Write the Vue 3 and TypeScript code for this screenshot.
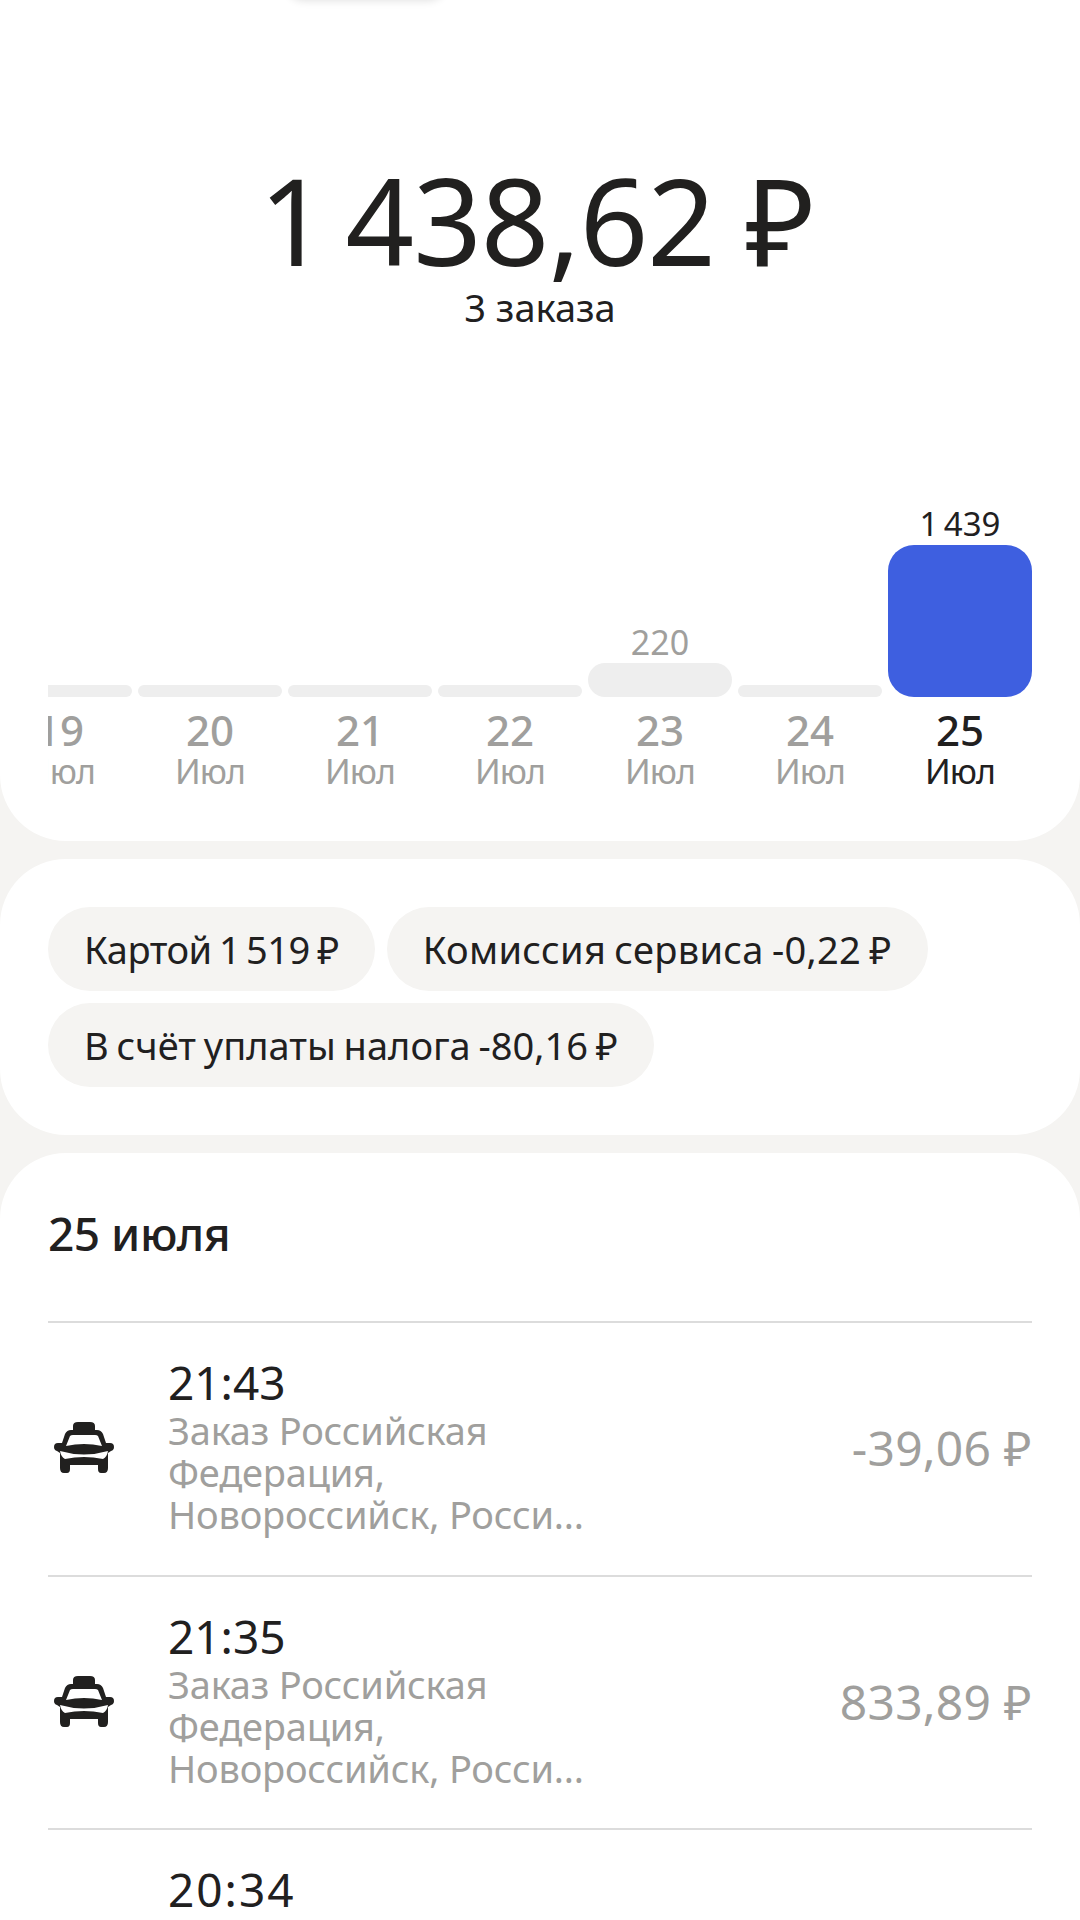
<script setup lang="ts">
interface Day { num: string; height: number; value?: string; active?: boolean }
interface Order { time: string; amount: string }

const days: Day[] = [
  { num: '19', height: 12 },
  { num: '20', height: 12 },
  { num: '21', height: 12 },
  { num: '22', height: 12 },
  { num: '23', height: 34, value: '220' },
  { num: '24', height: 12 },
  { num: '25', height: 153, value: '1\u2009439', active: true },
]
const chips = ['Картой 1\u2009519 ₽', 'Комиссия сервиса -0,22 ₽', 'В счёт уплаты налога -80,16 ₽']
const orders: Order[] = [
  { time: '21:43', amount: '-39,06 ₽' },
  { time: '21:35', amount: '833,89 ₽' },
  { time: '20:34', amount: '' },
]
</script>

<template>
  <div class="page">
    <div class="top-pill"></div>

    <section class="card hero">
      <div class="total">1&#8201;438,62 ₽</div>
      <div class="count">3 заказа</div>
      <div class="chart">
        <div v-for="d in days" :key="d.num" class="col" :class="{ active: d.active }">
          <div class="bar-area">
            <span v-if="d.value" class="value">{{ d.value }}</span>
            <div class="bar" :style="{ height: d.height + 'px' }"></div>
          </div>
          <div class="num">{{ d.num }}</div>
          <div class="month">Июл</div>
        </div>
      </div>
    </section>

    <section class="card chips">
      <span v-for="c in chips" :key="c" class="chip">{{ c }}</span>
    </section>

    <section class="card list">
      <h2 class="date">25 июля</h2>
      <div v-for="o in orders" :key="o.time" class="row">
        <svg class="car" viewBox="0 0 60 51" width="60" height="51">
          <path fill="#21201f" d="M19 4Q19 0 24 0H36Q41 0 41 4V8H43Q47 8 49 12L52 21H56Q60 21 60 25Q60 28 57 29L54 31V46Q54 51 50 51H47Q44 51 44 47V43H16V47Q16 51 13 51H10Q6 51 6 46V31L3 29Q0 28 0 25Q0 21 4 21H8L11 12Q13 8 17 8H19Z" />
          <path fill="#fff" d="M12 24L16 14Q17 13 19 13H41Q43 13 44 14L48 24Q30 20 12 24Z" />
          <path fill="#fff" d="M6 29Q30 36 54 29Q53 35 49 37Q30 33 11 37Q7 35 6 29Z" />
        </svg>
        <div class="info">
          <div class="time">{{ o.time }}</div>
          <div class="desc">Заказ Российская<br />Федерация,<br />Новороссийск, Росси...</div>
        </div>
        <div class="amount">{{ o.amount }}</div>
      </div>
    </section>
  </div>
</template>

<style scoped>
.page {
  position: relative;
  height: 1920px;
  overflow: hidden;
  background: #f5f4f2;
  font-family: "Noto Sans", "Open Sans", sans-serif;
  color: #21201f;
}
.top-pill {
  position: absolute;
  top: -30px;
  left: 288px;
  width: 156px;
  height: 30px;
  border-radius: 15px;
  box-shadow: 0 0 10px rgba(0, 0, 0, 0.14);
}
.card {
  background: #fff;
  border-radius: 66px;
  margin-bottom: 18px;
}
.hero {
  height: 841px;
  box-sizing: border-box;
  border-radius: 0 0 66px 66px;
  padding: 160px 48px 0;
  text-align: center;
}
.total {
  padding-right: 7px;
  font-size: 120px;
  line-height: 120px;
  letter-spacing: -1px;
}
.count {
  margin-top: 3px;
  font-size: 38px;
  line-height: 48px;
}
.chart {
  display: flex;
  justify-content: flex-end;
  gap: 6px;
  margin-top: 173px;
  overflow: hidden;
}
.col {
  flex: 0 0 144px;
  color: #a09f9d;
}
.bar-area {
  height: 193px;
  display: flex;
  flex-direction: column;
  justify-content: flex-end;
  align-items: center;
}
.value {
  padding-bottom: 1px;
  font-size: 34px;
  line-height: 40px;
}
.active .value {
  font-size: 33px;
}
.bar {
  width: 100%;
  border-radius: 10px;
  background: #eeeeee;
}
.col:nth-child(5) .bar {
  border-radius: 17px;
}
.active {
  color: #21201f;
}
.active .bar {
  background: #3e5fe0;
  border-radius: 26px;
}
.num {
  margin-top: 9px;
  font-size: 42px;
  line-height: 48px;
  font-weight: 500;
}
.month {
  margin-top: -2px;
  font-size: 34px;
  line-height: 38px;
  letter-spacing: -1px;
}
.chips {
  display: flex;
  flex-wrap: wrap;
  gap: 12px;
  padding: 48px 48px 48px;
}
.chip {
  height: 84px;
  padding: 0 36px;
  border-radius: 42px;
  background: #f5f4f2;
  font-size: 38px;
  line-height: 84px;
  word-spacing: -2px;
}
.chip:nth-child(1) {
  letter-spacing: -0.5px;
}
.chip:nth-child(2) {
  letter-spacing: 0.3px;
}
.list {
  padding: 0 48px;
  border-radius: 66px 66px 0 0;
  height: 800px;
}
.date {
  margin: 0;
  padding-top: 50px;
  height: 118px;
  font-size: 46px;
  line-height: 60px;
  font-weight: 500;
  letter-spacing: -0.5px;
}
.row {
  display: flex;
  align-items: center;
  height: 251.5px;
  border-top: 2px solid #dcdcdc;
}
.car {
  flex: none;
  margin: 0 0 2px 6px;
}
.info {
  margin-left: 54px;
  padding-bottom: 2px;
  flex: 1;
}
.time {
  margin-bottom: 5px;
  font-size: 46px;
  line-height: 44px;
}
.row:last-child .time {
  letter-spacing: 2px;
}
.desc {
  font-size: 38px;
  line-height: 42px;
  letter-spacing: -0.2px;
  color: #a09f9d;
}
.amount {
  padding-bottom: 2px;
  font-size: 48px;
  letter-spacing: 0.2px;
  color: #a09f9d;
}
</style>
